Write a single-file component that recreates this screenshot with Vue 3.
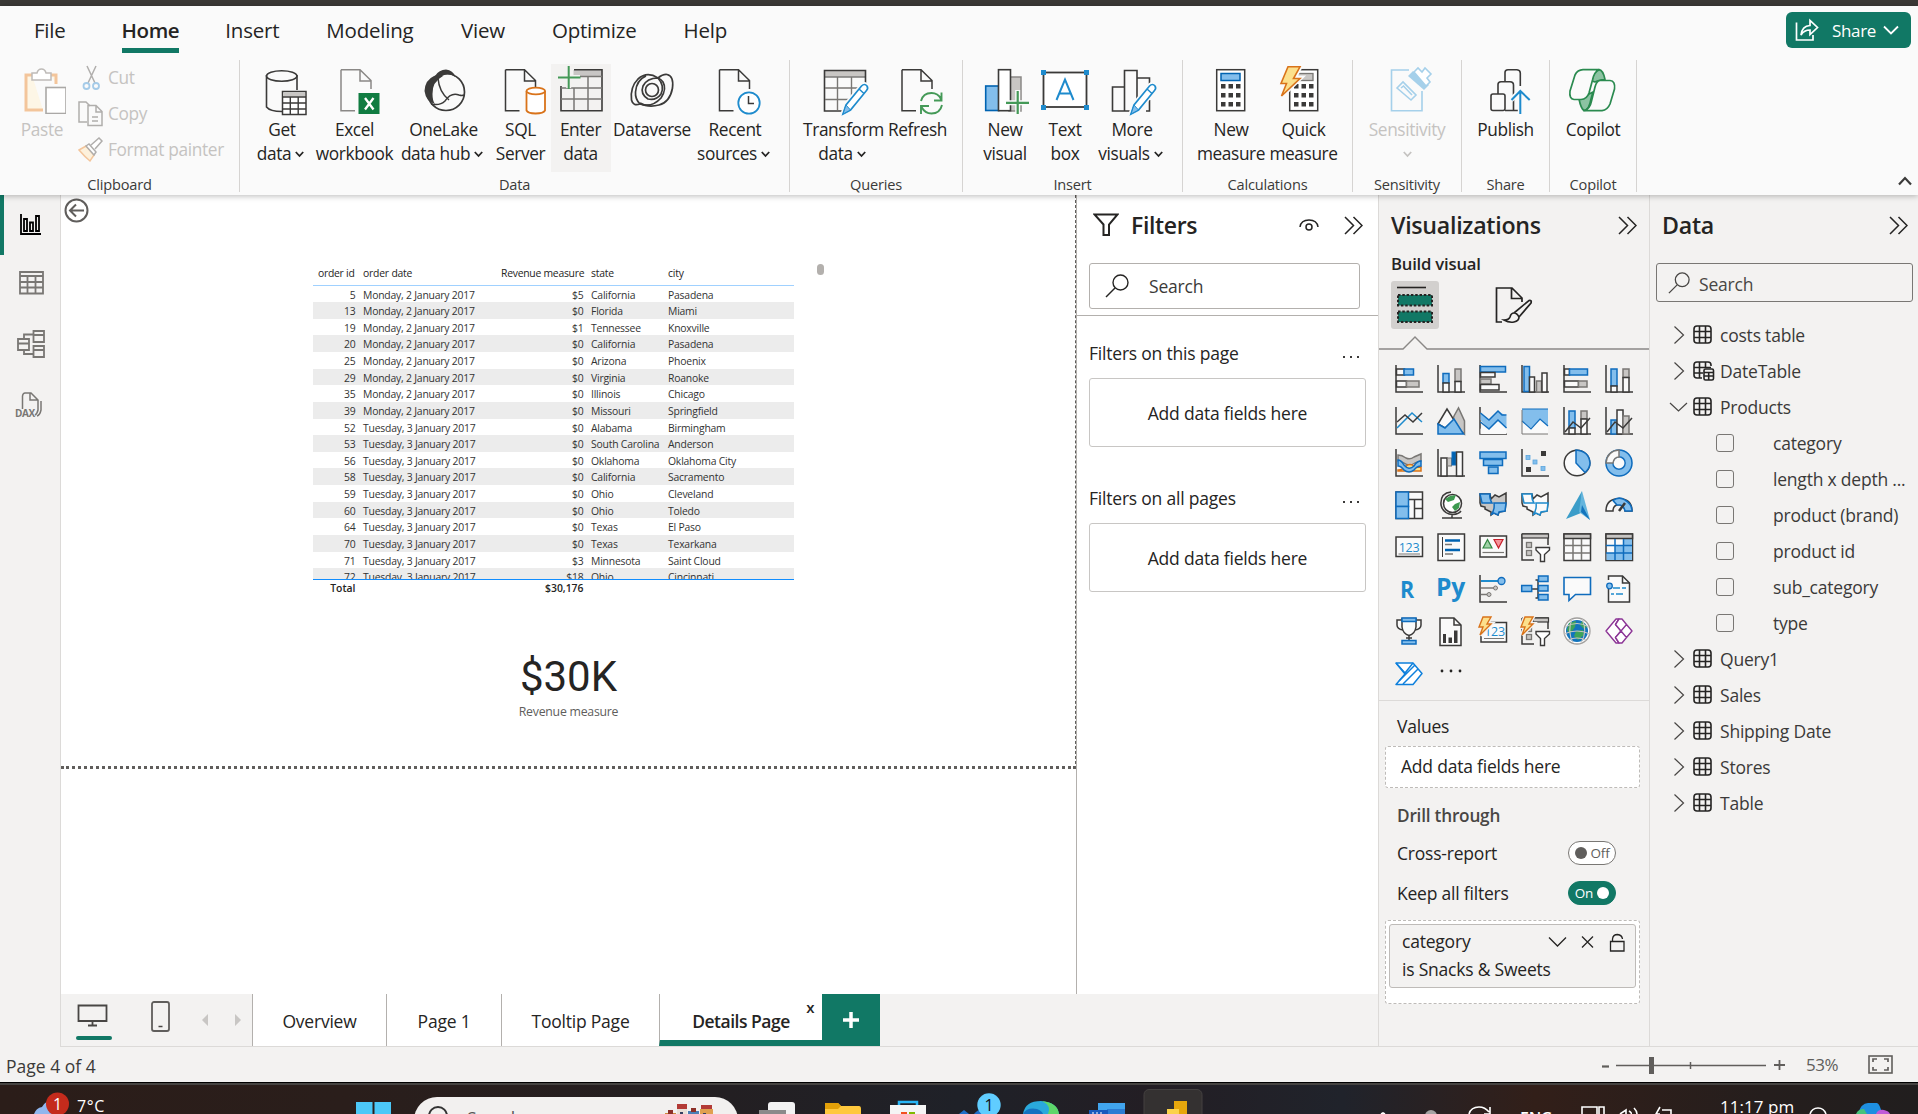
<script setup>
const menu = [
  { t: 'File', l: 34 }, { t: 'Home', l: 56, on: true }, { t: 'Insert', l: 46 }, { t: 'Modeling', l: 47 },
  { t: 'View', l: 47.5 }, { t: 'Optimize', l: 47 }, { t: 'Help', l: 47 },
]

const K = '#3b3a39'
const page = (x, c = K) =>
  `<path d="M${x} 3.7H${x + 19}L${x + 30} 14.5V23M${x + 14} 44.8H${x}V3.7M${x + 19} 4V15H${x + 30}" fill="none" stroke="${c}" stroke-width="1.5"/>`
const pencil = '<path d="M23 48L26 39L42 19.5Q45.500 17 47.500 21Q48 23 46 25L30 44Z" fill="#fafafa" stroke="#fafafa" stroke-width="5"/><path d="M23 48L26 39L41.500 20Q44.500 17 47 20Q48.500 22.500 46.500 24.500L30.500 44Z" fill="#fff" stroke="#1e8bcd" stroke-width="1.700"/><path d="M23 48L26 39L30.500 44Z" fill="#83beec" stroke="#1e8bcd"/><path d="M39 23L44 27.500" stroke="#1e8bcd" stroke-width="1.500"/>'
const dots = (x, y) => {
  let s = ''
  for (let r = 0; r < 3; r++) for (let c = 0; c < 3; c++) s += `<rect x="${x + c * 7.5}" y="${y + r * 9}" width="4.500" height="4.500"/>`
  return `<g fill="${K}">${s}</g>`
}

const art = {
  get: `<path d="M8.500 9V41Q12 45.500 24 45.500M39 9V24" fill="none" stroke="${K}" stroke-width="1.600"/><ellipse cx="23.700" cy="10" rx="15.200" ry="5.200" fill="none" stroke="${K}" stroke-width="1.600"/><rect x="24.500" y="25.500" width="23.500" height="23" fill="#fff" stroke="${K}" stroke-width="1.500"/><rect x="25.500" y="26.500" width="21.500" height="4" fill="#c8c6c4"/><path d="M24.500 31H48M24.500 37H48M24.500 43H48M32.300 31V48M40.200 31V48" stroke="${K}" stroke-width="1.400"/>`,
  excel: page(10, '#8a8886') + '<rect x="27.500" y="27" width="21" height="21" fill="#107c41"/><path d="M34 32L42.500 43.500M42.500 32L34 43.500" stroke="#fff" stroke-width="2.300"/>',
  lake: `<circle cx="26" cy="26" r="18.500" fill="#fafafa" stroke="${K}" stroke-width="1.700"/><path d="M14 10Q18 8 23 10Q12 16 12.500 28Q12.500 35 15 38Q6 36 4.500 25Q5 14 14 10Z" fill="${K}"/><path d="M15 10Q19 3.500 26 3.500Q33 4 35.500 11Q28 6.500 21 10.500Q18 12 15 10Z" fill="${K}"/><path d="M18 12Q19 26 29 34M11 38Q20 40 25 35Q31 26 39 29Q42 30 44 29" fill="none" stroke="${K}" stroke-width="1.500"/>`,
  sql: page(8.5) + '<path d="M29 25V44Q31 48 38 48Q46 48 48 44V25Z" fill="#fff" stroke="#fafafa" stroke-width="4"/><path d="M29.500 25V44.500Q31 47.500 38.500 47.500Q46.500 47.500 48 44.500V25" fill="#fff" stroke="#d9731a" stroke-width="1.800"/><ellipse cx="38.800" cy="25" rx="9.300" ry="3.400" fill="#fff" stroke="#d9731a" stroke-width="1.800"/>',
  enter: `<rect x="16.500" y="4" width="28" height="6.500" fill="#c8c6c4"/><path d="M4 20V44.700H45V3.700H17" fill="none" stroke="${K}" stroke-width="1.600"/><path d="M17 10.500H45M4 22H45M4 33H45M17 22V44M31 10.500V44" fill="none" stroke="#797774" stroke-width="1.500"/><path d="M1 11.500H23M11.700 0V22" stroke="#f3f2f1" stroke-width="5"/><path d="M1 11.500H23.500M11.700 0V23" stroke="#449957" stroke-width="2"/>`,
  verse: `<g fill="none" stroke="${K}" stroke-width="1.700"><path d="M30 12Q19 5 10 13Q2 21 3.500 34Q5 40.500 12 38Q7 33 7.500 26Q8.500 14 18 10"/><path d="M30 12Q35 8 39 8.500Q46 10 44.500 22Q42 36 31 39Q20 42 12 37"/><path d="M12 38Q24 42 33 32Q39 23 35 16Q33 13 30 12"/><path d="M30 12Q37 20 33 28Q28 35 20 33Q12 28 15 20Q19 12 30 12"/><circle cx="24" cy="24" r="6.500"/></g>`,
  recent: page(8.5) + '<circle cx="38" cy="37" r="13" fill="#fafafa"/><circle cx="38" cy="37" r="10.700" fill="#fff" stroke="#1e8bcd" stroke-width="1.800"/><path d="M37.500 30V37.500H43" fill="none" stroke="#3b3a39" stroke-width="1.500"/>',
  transform: `<rect x="4.500" y="5" width="40.500" height="5.500" fill="#c8c6c4"/><path d="M24 45H4.500V4.500H45.500V18" fill="none" stroke="${K}" stroke-width="1.600"/><path d="M4.500 11H45.500" stroke="${K}"/><path d="M5 22H38M5 33.500H30M17.500 11V44M31.500 11V33" stroke="#797774" stroke-width="1.400"/>` + pencil,
  refresh: page(8) + '<circle cx="37" cy="37" r="12.500" fill="#fafafa"/><path d="M27 35Q29 27 37.500 27Q44 27 47 33M47.500 26.500V34.500H40M48 39Q46 47.500 37.500 47.500Q31 47.500 27.500 41M27 48V40H35" fill="none" stroke="#449957" stroke-width="1.900"/>',
  newvis: `<rect x="28" y="11" width="12" height="34" fill="#c8c6c4" stroke="#8a8886" stroke-width="1.500"/><rect x="4.700" y="20" width="13" height="24.500" fill="#83beec" stroke="#0063b1" stroke-width="1.600"/><rect x="17.500" y="3.700" width="12" height="41" fill="#fff" stroke="${K}" stroke-width="1.600"/><path d="M25 36.800H48M36.700 24V48" stroke="#fafafa" stroke-width="5"/><path d="M25 36.800H48M36.700 25V48" stroke="#449957" stroke-width="2.200"/>`,
  text: `<rect x="2.500" y="6.500" width="43" height="34.500" fill="#fff" stroke="${K}" stroke-width="1.800"/><g fill="#1e8bcd"><rect y="4" width="5" height="5"/><rect x="43" y="4" width="5" height="5"/><rect y="39" width="5" height="5"/><rect x="43" y="39" width="5" height="5"/></g><path d="M15.500 34L24 13.500L32.500 34M18.500 27.500H29.500" fill="none" stroke="#1e8bcd" stroke-width="2"/>`,
  more: `<path d="M24 45H4.500V21H16.500V45M16.500 44V4.500H29V36M29 12H41.500V20M38 45H41.500V34" fill="none" stroke="${K}" stroke-width="1.600"/>` + pencil,
  calc: `<rect x="9.700" y="3.700" width="28" height="41" fill="#fff" stroke="${K}" stroke-width="1.500"/><rect x="14" y="7.500" width="19" height="7" fill="#83beec" stroke="#0063b1" stroke-width="1.500"/>` + dots(14, 18),
  quick: `<rect x="9.700" y="3.700" width="28" height="41" fill="#fff" stroke="${K}" stroke-width="1.500"/><rect x="15" y="7.500" width="18" height="7" fill="#c8c6c4" stroke="#797774" stroke-width="1.300"/>${dots(14, 18)}<path d="M8 .7H20L14 12H20L1.500 30L7 17H1Z" fill="#fafafa" stroke="#fafafa" stroke-width="5"/><path d="M8 .8H20L13.500 12.500H20L1.500 30L6.500 17.500H1Z" fill="#fce08c" stroke="#d9731a" stroke-width="1.600"/>`,
  sens: '<g fill="none" stroke="#a5d0ea" stroke-width="1.600"><path d="M26 4H8.500V44.700H39V25"/><path d="M14 22L20 16L33 29L28 34Z"/><path d="M18 22L20.500 20L29 29"/></g><path d="M25 10L30 5L46 19L41 24Z" fill="#a5d0ea"/><path d="M31 6L35 2L39 6L42 2L48 8L44 12L47 16L43 20Z" fill="#fff" stroke="#a5d0ea" stroke-width="1.600"/>',
  publish: `<g fill="none" stroke="${K}" stroke-width="1.600"><rect x="9" y="28" width="14" height="16.500" rx="2"/><path d="M16 28V18.500Q16 15.800 19 15.800H28Q31.500 16 31.500 19V44.500H23M23 15V6.500Q23 3.700 26 3.700H35Q38.300 4 38.300 7V20M31 44.500H37"/></g><path d="M38.300 48V25M29 34L38.300 24.500L47.700 34" fill="none" stroke="#fafafa" stroke-width="5"/><path d="M38.300 48V25M29.500 34L38.300 25L47.700 34" fill="none" stroke="#1e8bcd" stroke-width="2"/>`,
  copilot: '<g stroke="#2a8a4f" stroke-width="1.700" stroke-linejoin="round"><path d="M23 15Q24 4 30 3.700Q34 4 36 13.500Q29 14 26 16Z" fill="#8cc3a2"/><path d="M10 33Q12 43 15 44.500Q20 44.500 22 33L24 26Z" fill="#8cc3a2"/><path d="M14 3.700H30Q25 6 23.500 14L20 27Q18 33 12 33.500H5Q0 33 1 25L6 9Q8.500 4 14 3.700Z" fill="#fafafa"/><path d="M31 14.500H41Q46.500 15 45.500 23L41 38Q38.500 44 33 44.700H15Q21 43 22.500 35L26 21Q27.500 15 31 14.500Z" fill="#fafafa"/></g>',
}

const groups = [
  { n: 'Data', w: 550, b: [
    { i: 'get', w: 84, a: 'Get', c: 'data', v: 1 }, { i: 'excel', w: 61, a: 'Excel', c: 'workbook' },
    { i: 'lake', w: 117, a: 'OneLake', c: 'data hub', v: 1 }, { i: 'sql', w: 37, a: 'SQL', c: 'Server' },
    { i: 'enter', w: 83, a: 'Enter', c: 'data', hot: 1 }, { i: 'verse', w: 60, a: 'Dataverse' },
    { i: 'recent', w: 106, a: 'Recent', c: 'sources', v: 1 } ] },
  { n: 'Queries', w: 173, b: [ { i: 'transform', w: 107, a: 'Transform', c: 'data', v: 1 }, { i: 'refresh', w: 41, a: 'Refresh' } ] },
  { n: 'Insert', w: 220, b: [ { i: 'newvis', w: 84, a: 'New', c: 'visual' }, { i: 'text', w: 36, a: 'Text', c: 'box' }, { i: 'more', w: 98, a: 'More', c: 'visuals', v: 1 } ] },
  { n: 'Calculations', w: 170, b: [ { i: 'calc', w: 96, a: 'New', c: 'measure' }, { i: 'quick', w: 49, a: 'Quick', c: 'measure' } ] },
  { n: 'Sensitivity', w: 109, b: [ { i: 'sens', w: 108, a: 'Sensitivity', c: '', v: 1, off: 1 } ] },
  { n: 'Share', w: 88, b: [ { i: 'publish', w: 87, a: 'Publish' } ] },
  { n: 'Copilot', w: 87, b: [ { i: 'copilot', w: 86, a: 'Copilot' } ] },
]

const M = 'Monday, 2 January 2017'
const T = 'Tuesday, 3 January 2017'
const rows = [
  [5, M, '$5', 'California', 'Pasadena'], [13, M, '$0', 'Florida', 'Miami'], [19, M, '$1', 'Tennessee', 'Knoxville'],
  [20, M, '$0', 'California', 'Pasadena'], [25, M, '$0', 'Arizona', 'Phoenix'], [29, M, '$0', 'Virginia', 'Roanoke'],
  [35, M, '$0', 'Illinois', 'Chicago'], [39, M, '$0', 'Missouri', 'Springfield'], [52, T, '$0', 'Alabama', 'Birmingham'],
  [53, T, '$0', 'South Carolina', 'Anderson'], [56, T, '$0', 'Oklahoma', 'Oklahoma City'], [58, T, '$0', 'California', 'Sacramento'],
  [59, T, '$0', 'Ohio', 'Cleveland'], [60, T, '$0', 'Ohio', 'Toledo'], [64, T, '$0', 'Texas', 'El Paso'],
  [70, T, '$0', 'Texas', 'Texarkana'], [71, T, '$3', 'Minnesota', 'Saint Cloud'], [72, T, '$18', 'Ohio', 'Cincinnati'],
]

const B = '#0f6cbd'
const F = '#83beec'
const G = '#797774'
const H = '#c8c6c4'
const W = '#fafafa'
const ax = `<path d="M1 0V27H28" fill="none" stroke="${K}" stroke-width="1.500"/>`
const r = (x, y, w, h, f, s, sw = 1.5) => `<rect x="${x}" y="${y}" width="${w}" height="${h}" fill="${f}" stroke="${s}" stroke-width="${sw}"/>`
const p = (d, s, f = 'none', sw = 1.5) => `<path d="${d}" fill="${f}" stroke="${s}" stroke-width="${sw}"/>`
const bolt = p('M4 0H12L8 7H12L1 18L4 10H0Z', '#f3f2f1', '#f3f2f1', 4) + p('M4 0H12L8 7H12L1 18L4 10H0Z', '#d9731a', '#fce08c', 1.4)
const slicer = (c) => p('M1 1V27H13M27 12V1H1', K) + (c || r(1, 1, 26.5, 4, H, K, 1.2)) + r(5.5, 9.5, 5, 5, H, G, 1.3) + r(5.5, 17.5, 5, 5, H, G, 1.3) + p('M15 14.500H28.500V17L23.500 21.500V28.500H19.500V21.500L15 17Z', K, '#fff', 1.4)
const viz = [
  ax + r(1.5, 4, 8, 6, W, K) + r(9, 4, 9.5, 6, F, B) + r(1.5, 16, 10, 6, W, K) + r(11.5, 16, 12.5, 6, H, G),
  ax + r(6, 8.5, 6, 9.5, F, B) + r(6, 18, 6, 9, W, K) + r(18, 4, 6, 12.5, H, G) + r(18, 16.5, 6, 10.5, W, K),
  ax + r(1.5, 1.5, 25, 5.5, F, B) + r(1.5, 7.5, 14.5, 4.5, W, K) + r(1.5, 14, 10.5, 5, H, G) + r(1.5, 19.5, 18.5, 5.5, W, K),
  ax + r(3, 1.5, 5.5, 25, F, B) + r(8.5, 12, 5, 15, W, K) + r(15.5, 16, 5, 11, H, G) + r(21, 8, 5, 19, W, K),
  ax + r(1.5, 4, 5, 6, W, K) + r(6.5, 4, 18, 6, F, B) + r(1.5, 16, 14, 6, W, K) + r(15.5, 16, 8.5, 6, H, G),
  ax + r(6, 4, 6, 17, F, B) + r(6, 21, 6, 6, W, K) + r(18, 4, 6, 8.5, H, G) + r(18, 12.5, 6, 14.5, W, K),
  ax + p('M2 21L17 6L27 15', '#1e8bcd') + p('M2 15L10 8L18 15L27 6', K),
  p('M17 9L21.500 1L27.500 14V27L15 15Z', G, H) + p('M1 17L10 2L17 13L8 21Z', K, W) + p('M1 17L8 21L17 12L26.500 27H1Z', B, F),
  ax + p('M1.500 6L10 13L19 4L27.500 9V22L19 14L10 22L1.500 13Z', 'none', F) + p('M1.500 22L5 17L10 22L19 14L27.500 21V27H1.500Z', 'none', W) + p('M1.500 6L10 13L19 4L23 8H27.500M1.500 15L10 22L19 13L27.500 21', B),
  p('M1 2H27V19L19 12L10 21L1 14Z', 'none', F) + p('M1 15L10 22L19 13L27 20V27H1Z', 'none', W) + p('M1 2H27M1 14L10 22L19 12L27 19', B, 'none', 1.2) + p('M1 3V27M1 27H27', G, 'none', 1),
  ax + r(6, 4, 6, 17, F, B) + r(6, 21, 6, 6, W, K) + r(18, 4, 6, 8, H, G) + r(18, 12, 6, 15, W, K) + p('M2 25L10 15L18 21L27 11', K),
  ax + r(6, 13, 6, 14, F, B) + r(12, 3, 6, 24, W, K) + r(18, 9, 6, 18, H, G) + p('M2 25L10 15L18 21L27 11', K),
  ax + p('M3 6Q7 6 11 9Q15 11 19 8L26 5V12L20 14Q14 18 9 14Q6 12 3 12Z', G, H) + p('M3 21Q8 21 11 17Q15 14 19 17Q22 19 26 18V22H3Z', '#d9731a', '#fce08c') + p('M3 11Q6 11 9 16Q14 22 19 17Q22 12 26 12V17Q22 17 19 21Q14 25 9 21Q6 17 3 17Z', B, F),
  ax + r(4, 9, 6, 18, W, K) + r(10.5, 9, 4, 8, H, G, 1) + r(15, 3, 3.5, 13, '#0063b1', B, 1) + r(19.5, 3, 6, 24, W, K),
  r(1, 3, 26, 6.5, F, B) + r(4.5, 10.5, 19, 6, F, B) + r(9.5, 18, 9.5, 6.5, F, B),
  ax + '<g fill="#83beec" stroke="#5aa5de" stroke-width=".8"><rect x="5" y="6.500" width="4" height="4"/><rect x="12" y="11" width="4" height="4"/><rect x="20" y="17.500" width="4" height="4"/></g><g fill="#3b3a39"><rect x="20" y="2" width="5" height="5"/><rect x="5" y="18" width="5" height="5"/></g>',
  `<circle cx="14" cy="14" r="12.800" fill="${W}" stroke="${K}" stroke-width="1.500"/>` + p('M13 1V14L22 23.500Q27 19 27 14Q26 2 13 1Z', B, F),
  `<circle cx="14" cy="14" r="10" fill="none" stroke="${F}" stroke-width="6.500"/><circle cx="14" cy="14" r="13" fill="none" stroke="${B}" stroke-width="1.500"/><circle cx="14" cy="14" r="6.200" fill="${W}" stroke="${B}" stroke-width="1.500"/>` + p('M1 14Q2 2 14 1V8Q9 8 8 14Z', G, W),
  r(1, 1, 26.5, 26.5, W, K) + r(1, 1, 12.5, 14.5, F, B) + r(1, 15.5, 12.5, 12, F, B) + p('M14 8.500H27.500M19.500 8.500V27M19.500 17.500H27.500', K),
  `<circle cx="15.500" cy="12.500" r="9" fill="#fff" stroke="${K}" stroke-width="1.500"/><path d="M13 5L19 4L17 9L11 11L8 8ZM18 13L23 11L22 17L18 20L15 16Z" fill="#3d9a50"/>` + p('M14 1Q3 2 4 14Q6 23 16 23.500Q22 23 24 20M15 24V27M5 27H25', K),
  p('M1 12V3H11L12 8L16 4L20 6L27 2V12L26 20L20 21L19 24L15 22L12 24V21L6 18V16L2 15Z', K, H) + p('M1 3H11Q10 7 13 12H3Z', B, F) + p('M15 12H27L26 20L20 21L19 24L15 22L12 24Q16 19 15 12Z', B, F),
  p('M1 12V3H11L12 8L16 4L20 6L27 2V12L26 20L20 21L19 24L15 22L12 24V21L6 18V16L2 15Z', K, W) + p('M1 3H11Q10 7 13 12H3Z', '#1e8bcd', W) + p('M15 12H27L26 20L20 21L19 24L15 22L12 24Q16 19 15 12Z', '#1e8bcd', W),
  '<path d="M19 0L3 28L18 22Z" fill="#3b9dc9"/><path d="M19 0L27 29L16 21Z" fill="#64b5dd"/><path d="M18 21L27 29L19 14Z" fill="#1274bd"/>',
  p('M1 20Q1 8 14 7.500Q27 8 27 20H20Q20 14 14 13.500Q8 14 8 20Z', K, W) + p('M8 9.500Q14 5 20 9Q27 13 27 20H20Q19 15 15 14L12 14Z', B, F) + p('M14 20L20 12', K, 'none', 2.5),
  r(1, 4, 26.5, 19.5, W, K) + '<text x="14" y="18.500" text-anchor="middle" font-size="12.500" letter-spacing="-.3" font-family="Open Sans, sans-serif" fill="#1e8bcd">123</text>' + p('M3.500 21H25', G, 'none', 1),
  r(1, 1, 26.5, 26.5, W, K) + p('M5.500 4V24', K, 'none', 1) + p('M8 7.500H23M8 17H23', '#0063b1', 'none', 2.4) + p('M8 11.500H15M8 21H16', G),
  r(1, 3, 26.5, 21, W, K) + p('M4 15L8.500 6.500L13 15Z', '#2f8540', '#9fd2a7', 1.2) + p('M15 6.500H24L19.500 15Z', '#c8202b', '#f4949a', 1.2) + p('M3.500 19.500H25', G, 'none', 1.2),
  slicer(),
  r(1, 1, 26.5, 26.5, W, K) + r(1, 1, 26.5, 4.5, H, K) + p('M1 12.500H27M1 20H27M10 6V27M18.500 6V27', G),
  r(1, 1, 26.5, 26.5, W, K) + `<path d="M18.500 6H27V27H1.500V20H10V13H18.500Z" fill="${F}"/>` + r(1, 1, 26.5, 4.5, H, K) + p('M1 12.500H27M1 20H27M10 6V27M18.500 6V27', B),
  '<text x="5" y="22.500" font-size="24" font-weight="700" font-family="Open Sans, sans-serif" textLength="14" lengthAdjust="spacingAndGlyphs" fill="#1e8bcd">R</text>',
  '<text x="-1" y="20.500" font-size="25" font-weight="700" font-family="Open Sans, sans-serif" textLength="29" lengthAdjust="spacingAndGlyphs" fill="#1e8bcd">Py</text>',
  ax + p('M2 6H20', '#1e8bcd', 'none', 2) + p('M2 13H16M2 19.500H9', G) + `<circle cx="22.500" cy="6" r="3.500" fill="${F}" stroke="${B}" stroke-width="1.300"/><circle cx="16.500" cy="13" r="2" fill="${H}" stroke="${G}"/><circle cx="10" cy="19.500" r="2" fill="${H}" stroke="${G}"/>`,
  p('M10 14H17M17 5V23H14.500M14.500 5H17', K) + r(0.7, 10.5, 10, 6, F, B) + r(17.5, 1, 9.5, 5.5, F, B) + r(17.5, 10.5, 9.5, 5.5, F, B) + r(17.5, 19.5, 9.5, 5.5, F, B),
  p('M1 2.500H27.500V19.500H12.500L6 25.500V19.500H1Z', B, W, 1.6),
  p('M3.500 5V1H17.500L24.500 8V27H3.500V14', K, W) + p('M17.500 1V8H24.500', K) + p('M8 13H15M17 13H21M6 19H9M11 19H18', '#1e8bcd') + `<circle cx="4.500" cy="11" r="2.800" fill="${F}" stroke="${B}" stroke-width="1.300"/>`,
  p('M7 3H2V8Q2 12 8 13M21 3H26V8Q26 12 20 13', K, W) + p('M7 1.500V10Q8 17 14 18.500Q20 17 21 10V1.500Z', K, W) + r(7, 1, 14, 3.5, F, B) + p('M14 18V23M11 21H17', K) + r(7, 23.5, 14, 3.5, F, B),
  p('M3 1H17L24 8V28.500H3Z', K, W) + p('M17 1V8H24', K) + '<path d="M6 17H9V26H6ZM11.500 20.500H15V26H11.500ZM17 13.500H20.500V26H17Z" fill="#3b3a39"/>',
  r(2, 5.5, 25.5, 19.5, W, K) + '<text x="15.500" y="19" text-anchor="middle" font-size="12.500" letter-spacing="-.3" font-family="Open Sans, sans-serif" fill="#1e8bcd">123</text>' + p('M5 21.500H25', G, 'none', 1) + bolt,
  slicer(r(12, 1, 15.5, 4, H, K, 1.2)) + bolt,
  '<circle cx="14" cy="14" r="13" fill="#fff" stroke="#a19f9d" stroke-width="1.300"/><circle cx="14" cy="14" r="11" fill="#1274bd"/><path d="M6 6L13 4L12 10L7 17L4 13ZM13 14L20 13L21 18L15 23L11 19ZM19 4L24 10L21 12L17 8Z" fill="#3da35a"/><path d="M2 10Q14 3 26 10M1 17Q14 11 27 17M9 2Q4 14 10 26M19 2Q25 14 18 26M5 23Q14 19 23 23" fill="none" stroke="#c8c6c4" stroke-width="1.100"/>',
  '<g fill="#fff" stroke="#8c3596" stroke-width="1.400" stroke-linejoin="round"><path d="M1 14L11 2H14L10.500 7.500L16 14L10.500 20.500L14 26H11Z"/><path d="M10.500 7.500L14 2H17L21.500 7.500L16 14ZM10.500 20.500L16 14L21.500 20.500L17 26H14ZM16 14L21.500 7.500L27 14L21.500 20.500Z"/></g>',
  '<g fill="#fff" stroke="#0f80dc" stroke-width="1.500" stroke-linejoin="round"><path d="M1 4H18L27 14.500L18 25.500H1L10 15Z"/><path d="M1 4L10 14L18 4M4 22L20 6M8 25L23 10" fill="none"/></g>',
  '<g fill="#252423"><circle cx="5" cy="12" r="1.400"/><circle cx="14" cy="12" r="1.400"/><circle cx="23" cy="12" r="1.400"/></g>',
]

const tree = [
  { t: 'costs table' }, { t: 'DateTable', d: 1 }, { t: 'Products', o: 1 },
  { f: 'category' }, { f: 'length x depth ...' }, { f: 'product (brand)' }, { f: 'product id' }, { f: 'sub_category' }, { f: 'type' },
  { t: 'Query1' }, { t: 'Sales' }, { t: 'Shipping Date' }, { t: 'Stores' }, { t: 'Table' },
]
</script>

<template>
  <div class="screen">
    <div class="titlebar"></div>
    <header class="ribbon">
      <nav class="menu">
        <span v-for="m in menu" :key="m.t" class="mi" :class="{ on: m.on }" :style="{ marginLeft: m.l + 'px' }">{{ m.t }}</span>
        <button class="share">
          <svg width="24" height="24" viewBox="0 0 24 24" fill="none" stroke="#fff" stroke-width="1.700"><path d="M1.500 4.500V22H18V17M6 17Q7 8 15 7.500V2.500L22.500 9.500L15 16.500V12Q9 12 6 17Z" /></svg>
          <span>Share</span>
          <svg width="16" height="10" viewBox="0 0 16 10" fill="none" stroke="#fff" stroke-width="1.800"><path d="M1 1.500L8 8.500L15 1.500" /></svg>
        </button>
      </nav>
      <div class="tools">
        <section class="group clip">
          <div class="cbody">
            <div class="paste">
              <svg width="48" height="48" viewBox="0 0 48 48"><path d="M14 9H8V44H25M33 9H38V18" fill="#fdf6e6" stroke="#f3c59b" stroke-width="3" /><path d="M14 7H19Q20 3 23.500 3Q27 3 28 7H33V14H14Z" fill="#fff" stroke="#bebbb8" stroke-width="1.500" /><rect x="28" y="21.500" width="20" height="26" fill="#fff" stroke="#aaa8a6" stroke-width="1.600" /></svg>
              <span>Paste</span>
            </div>
            <div class="clist">
              <div><svg width="26" height="26" viewBox="0 0 26 26" fill="none"><path d="M9 1L17 18M18 1L10 18" stroke="#b0aeac" stroke-width="1.500" /><circle cx="8.500" cy="21" r="3" stroke="#a5cbe8" stroke-width="1.800" /><circle cx="18" cy="21" r="3" stroke="#a5cbe8" stroke-width="1.800" /></svg>Cut</div>
              <div><svg width="26" height="26" viewBox="0 0 26 26" fill="none" stroke="#b0aeac" stroke-width="1.500"><path d="M9 21H1V1H8L12 5" /><path d="M10 4.500H18L24 10.500V24.500H10ZM18 4.500V11H24M14 16H20M14 20H20" /></svg>Copy</div>
              <div><svg width="26" height="26" viewBox="0 0 26 26" fill="none"><path d="M1 13L8 9L16 18L12 24Q7 20 1 13Z" fill="#fdf1dc" stroke="#f3c59b" stroke-width="1.500" /><path d="M8 9L11 7L18 15L16 18ZM13 8L21 1L24 4L17 12" stroke="#b0aeac" stroke-width="1.500" fill="#fff" /></svg>Format painter</div>
            </div>
          </div>
          <div class="gname">Clipboard</div>
        </section>
        <section v-for="g in groups" :key="g.n" class="group" :style="{ width: g.w + 'px' }">
          <div class="gbody">
            <div v-for="b in g.b" :key="b.i" class="cell" :style="{ width: b.w + 'px' }">
              <div class="btn" :class="{ hot: b.hot, off: b.off }">
                <svg width="48" height="50" viewBox="0 0 48 50" overflow="visible" v-html="art[b.i]"></svg>
                <span>{{ b.a }}</span>
                <span v-if="b.c !== undefined" class="l2" :class="{ drop2: b.v && b.c }">{{ b.c }}<svg v-if="b.v" width="9" height="7" viewBox="0 0 9 7" fill="none" stroke="currentColor" stroke-width="1.800"><path d="M.8 1L4.500 5L8.200 1" /></svg></span>
              </div>
            </div>
          </div>
          <div class="gname">{{ g.n }}</div>
        </section>
        <svg class="fold" width="14" height="10" viewBox="0 0 14 10" fill="none" stroke="#3b3a39" stroke-width="2.200"><path d="M1 8.500L7 2L13 8.500" /></svg>
      </div>
    </header>

    <main class="work">
      <aside class="rail">
        <div class="ind"></div>
        <svg width="24" height="24" viewBox="0 0 24 24" fill="none" stroke="#000" stroke-width="1.800"><path d="M2 1V21H22M5 18V6H8V18ZM11 18V9.500H14V18ZM17 18V3H20V18Z" /></svg>
        <svg width="26" height="24" viewBox="0 0 26 24" fill="none" stroke="#797774" stroke-width="1.800"><path d="M2 1H25V22.500H2ZM2 5H25M2 11H25M2 16.500H25M9.500 5V22M17.500 5V22" /></svg>
        <svg width="28" height="28" viewBox="0 0 28 28" fill="none" stroke="#797774" stroke-width="1.800"><path d="M1 9H12V20H1ZM1 13.500H12M16.500 1H27V12H16.500ZM16.500 5H27M16.500 16H27V27H16.500ZM16.500 20H27M7 9V4.500H16M7 20V24H16" /></svg>
        <svg width="28" height="26" viewBox="0 0 28 26" fill="none" stroke="#797774" stroke-width="1.500"><path d="M7.500 17V4Q8 1 10 1H16L23 8V18Q22 22 20 23M15 1V8H23M26 9V18Q25 23 22 24" /><text x="0" y="24.500" font-size="10" font-weight="700" stroke="none" fill="#797774" font-family="Open Sans, sans-serif" textLength="20">DAX</text></svg>
      </aside>

      <div class="stage">
        <div class="canvas-row">
          <div class="canvas">
            <div class="page">
              <svg class="back" width="25" height="25" viewBox="0 0 25 25" fill="none" stroke="#605e5c" stroke-width="2"><circle cx="12.500" cy="12.500" r="11" /><path d="M20 12.500H6M12 6.500L6 12.500L12 18.500" /></svg>
              <div class="visual">
                <div class="tbl">
                  <div class="tr th"><span>order id</span><span>order date</span><span>Revenue measure</span><span>state</span><span>city</span></div>
                  <div class="tb"><div v-for="x in rows" :key="x[0]" class="tr"><span v-for="(c, i) in x" :key="i">{{ c }}</span></div></div>
                  <div class="tr tot"><span>Total</span><span></span><span>$30,176</span></div>
                </div>
                <i class="thumb"></i>
              </div>
              <div class="card"><b>$30K</b><span>Revenue measure</span></div>
            </div>
          </div>

          <aside class="filters">
            <div class="fh">
              <svg width="26" height="24" viewBox="0 0 26 24" fill="none" stroke="#252423" stroke-width="2"><path d="M1.500 1.500H24.500L16 11.500V22H10.500V11.500Z" /></svg>
              <h2>Filters</h2>
              <svg class="eye" width="20" height="14" viewBox="0 0 20 14" fill="none" stroke="#252423" stroke-width="1.500"><path d="M1 9Q2 2 10 2Q18 2 19 9" /><circle cx="10" cy="9" r="3" /></svg>
              <svg width="19" height="19" viewBox="0 0 19 19" fill="none" stroke="#252423" stroke-width="1.500"><path d="M1 1L9.500 9.500L1 18M9.500 1L18 9.500L9.500 18" /></svg>
            </div>
            <div class="search"><svg width="24" height="24" viewBox="0 0 24 24" fill="none" stroke="#252423" stroke-width="1.400"><circle cx="15.500" cy="8.500" r="7.500" /><path d="M10 14L1 23" /></svg>Search</div>
            <div class="rule"></div>
            <template v-for="n in ['Filters on this page', 'Filters on all pages']" :key="n">
              <div class="fl"><span>{{ n }}</span><i></i><i></i><i></i></div>
              <div class="drop">Add data fields here</div>
            </template>
          </aside>
        </div>
        <div class="pages">
          <svg width="191" height="52" viewBox="0 0 191 52" fill="none"><path d="M17.500 11.500H45.500V27H17.500ZM31.500 27V31M27 31.500H36" stroke="#484644" stroke-width="1.800" /><rect x="15" y="42" width="36" height="4" rx="2" fill="#117865" /><rect x="91" y="8" width="17" height="29" rx="2" stroke="#605e5c" stroke-width="1.800" /><path d="M97.500 32.500H101.500" stroke="#484644" stroke-width="1.500" /><path d="M147 20V32L141 26ZM174 20V32L180 26Z" fill="#c8c6c4" /></svg>
          <div class="pt p1">Overview</div><div class="pt p2">Page 1</div><div class="pt p3">Tooltip Page</div>
          <div class="pt p4">Details Page<i>x</i></div>
          <div class="add"><svg width="16" height="16" viewBox="0 0 16 16"><path d="M0 8H16M8 0V16" stroke="#fff" stroke-width="3.500" /></svg></div>
        </div>
      </div>

      <aside class="viz">
        <div class="vh"><h2>Visualizations</h2><svg width="19" height="19" viewBox="0 0 19 19" fill="none" stroke="#252423" stroke-width="1.500"><path d="M1 1L9.500 9.500L1 18M9.500 1L18 9.500L9.500 18" /></svg></div>
        <div class="bv">Build visual</div>
        <div class="modes">
          <div class="mode"><svg width="48" height="48" viewBox="0 0 48 48"><path d="M6 6.500H35" stroke="#252423" stroke-width="1.600" /><g fill="#117865" stroke="#252423" stroke-width="2" stroke-dasharray="2.500 1.800"><rect x="7" y="14" width="34" height="10.500" /><rect x="7" y="30.500" width="34" height="10.500" /></g></svg></div>
          <svg width="38" height="38" viewBox="0 0 38 38" fill="none" stroke="#252423" stroke-width="1.700"><path d="M7 36H1.500V2H17L27 12V16M16.500 2V12.500H27" /><path d="M19 27L34 14.500Q37 14 36 17L24 31Q22 27 19 27ZM19 27Q16 27 15 31Q14 34 9 34Q14 37 19 36Q24 35 24 31" fill="#f3f2f1" /></svg>
        </div>
        <svg class="notch" width="270" height="14" viewBox="0 0 270 14" fill="none" stroke="#8a8886" stroke-width="1.400"><path d="M0 13H24L36 1L48 13H270" /></svg>
        <div class="vgrid"><svg v-for="(v, i) in viz" :key="i" width="28" height="28" viewBox="0 0 28 28" overflow="visible" v-html="v"></svg></div>
        <div class="wells">
          <div class="wl">Values</div>
          <div class="well">Add data fields here</div>
          <div class="wl dr">Drill through</div>
          <div class="wl sw"><span>Cross-report</span><div class="tg"><i></i>Off</div></div>
          <div class="wl sw"><span>Keep all filters</span><div class="tg on">On<i></i></div></div>
          <div class="fbox"><div class="fcard">
            <div class="f1"><span>category</span>
              <svg width="78" height="20" viewBox="0 0 78 20" fill="none" stroke="#252423" stroke-width="1.300"><path d="M1 5.500L9.500 14L18 5.500M34 4.500L45 15.500M45 4.500L34 15.500M62.500 9.500H76V19H62.500ZM64.500 9.500V7Q65 2.500 69.500 2.500Q74 3 74.500 7" /></svg></div>
            <div>is Snacks &amp; Sweets</div>
          </div></div>
        </div>
      </aside>

      <aside class="data">
        <div class="vh"><h2>Data</h2><svg width="19" height="19" viewBox="0 0 19 19" fill="none" stroke="#252423" stroke-width="1.500"><path d="M1 1L9.500 9.500L1 18M9.500 1L18 9.500L9.500 18" /></svg></div>
        <div class="ds"><svg width="22" height="22" viewBox="0 0 24 24" fill="none" stroke="#484644" stroke-width="1.400"><circle cx="15.500" cy="8.500" r="7.500" /><path d="M10 14L1 23" /></svg><span>Search</span></div>
        <div v-for="n in tree" :key="n.t || n.f" class="node" :class="{ leaf: n.f }">
          <template v-if="n.t">
            <svg width="20" height="20" viewBox="0 0 20 20" fill="none" stroke="#484644" stroke-width="1.200"><path :d="n.o ? 'M1 6L9.500 14L18 6' : 'M5.500 1.500L14.500 10L5.500 18.500'" /></svg>
            <svg class="ti" width="22" height="20" viewBox="0 0 22 20" fill="none" stroke="#252423" stroke-width="1.600">
              <template v-if="n.d"><path d="M9 17H4Q1 17 1 14V4Q1 1 4 1H15Q18 1 18 4V5M1 6.500H18M1 12H10M6.500 1V17M12.500 1V7" /><rect x="11" y="8" width="9.500" height="11" rx="1.500" fill="#f3f2f1" /><path d="M11 11.500H20M11 15H20M15.700 12V19" /></template>
              <path v-else d="M4 1H15Q18 1 18 4V15Q18 18 15 18H4Q1 18 1 15V4Q1 1 4 1ZM1 6.500H18M1 12.500H18M6.500 1V18M12.500 1V18" />
            </svg>
            <span>{{ n.t }}</span>
          </template>
          <template v-else><i></i><span>{{ n.f }}</span></template>
        </div>
      </aside>
    </main>

    <footer class="status">
      <span>Page 4 of 4</span>
      <svg width="186" height="20" viewBox="0 0 186 20" stroke="#605e5c" fill="none"><path d="M1 11.500H8" stroke-width="2.200" /><path d="M15 10.500H165" stroke-width="1.300" /><path d="M50.500 2V19" stroke-width="5" /><path d="M89.500 7V14" stroke-width="1.500" /><path d="M173 10H184M178.500 5V15" stroke-width="1.800" /></svg>
      <span class="pct">53%</span>
      <svg width="25" height="19" viewBox="0 0 25 19" fill="none" stroke="#605e5c"><rect x="1" y="1" width="23" height="17" stroke-width="1.600" /><path d="M5 7V4H9M16 4H20V7M20 12V15H16M9 15H5V12" stroke-width="1.700" /></svg>
    </footer>

    <div class="taskbar">
      <svg width="414" height="29" viewBox="0 0 414 29">
        <path d="M34 29Q36 23 42 22Q46 14 56 15V29Z" fill="#8fb6ee" /><circle cx="57.500" cy="19" r="11.500" fill="#c42b1c" />
        <text x="57.500" y="25" text-anchor="middle" class="tx">1</text><text x="77" y="27" class="tx" textLength="27">7°C</text>
        <path d="M356 17H372.500V29H356ZM374.500 17H391V29H374.500Z" fill="#4cc8f8" />
      </svg>
      <div class="pill"><svg width="24" height="24" viewBox="0 0 24 24" fill="none" stroke="#333" stroke-width="2"><circle cx="12" cy="12" r="9" /></svg><span>Search</span>
        <svg class="town" width="52" height="18" viewBox="0 0 52 18"><path d="M1 10H12V18H1Z" fill="#d08a3c" /><path d="M13 4H23V18H13Z" fill="#e8e0d8" /><path d="M13 1H23V6H13ZM37 2H48V7H37Z" fill="#b33a36" /><path d="M24 8H35V18H24Z" fill="#4d7fb5" /><path d="M36 6H49V18H36Z" fill="#e0a050" /><path d="M4 7H9V12H4ZM27 5H32V9H27Z" fill="#8c3028" /><path d="M26 11H29V15H26ZM39 10H42V14H39ZM16 9H19V13H16Z" fill="#343f60" /></svg>
      </div>
      <svg width="640" height="29" viewBox="738 0 640 29">
        <path d="M768 20Q768 17 771 17H792Q795 17 795 20V29H768Z" fill="#f2f2f2" /><path d="M759 25H786V29H759Z" fill="#8a8a8a" />
        <path d="M825 18H838L841 21H859Q861 21 861 24V29H825Z" fill="#ffc83d" /><path d="M825 18H838L841 21L838 24H825Z" fill="#e3a008" />
        <path d="M899 21V17H917V21" fill="none" stroke="#29b6f6" stroke-width="2.500" /><path d="M890 20H926V29H890Z" fill="#f5f5f5" /><path d="M901 27H907V29H901Z" fill="#f25022" /><path d="M909 27H915V29H909Z" fill="#7fba00" />
        <path d="M959 29L964 25L969 29ZM974 29Q977 25 982 24V29Z" fill="#1f6fc9" /><circle cx="989" cy="20" r="11.700" fill="#60cdff" /><text x="989" y="26" text-anchor="middle" class="tx dk">1</text>
        <path d="M1023 29Q1025 16 1041 16Q1057 17 1059 29Z" fill="#2aa9dc" /><path d="M1042 16Q1058 18 1059 29H1048Q1052 21 1042 16Z" fill="#5ed66a" /><path d="M1023 29Q1027 22 1037 24Q1042 26 1043 29Z" fill="#1572c0" />
        <path d="M1098 18H1125V29H1098Z" fill="#41a5ee" /><path d="M1107 24H1125V29H1107Z" fill="#2b7cd3" /><path d="M1089 25H1108V29H1089Z" fill="#185abd" /><path d="M1093 27V29M1097 27V29M1101 27V29" stroke="#fff" />
        <rect x="1144" y="4.500" width="58" height="32" rx="5" fill="#343131" stroke="#444141" /><path d="M1174 16H1187V29H1174Z" fill="#e6a70c" /><path d="M1167 24H1179V29H1167Z" fill="#fbd24a" />
      </svg>
      <svg width="540" height="29" viewBox="1378 0 540 29" fill="none" stroke="#fff" stroke-width="1.600">
        <path d="M1381 29L1383 28L1385 29" /><circle cx="1431" cy="31" r="6" fill="#a5a3a3" stroke="none" /><path d="M1469 29Q1471 22 1479 22Q1485 22 1489 27M1490 22V29H1484" />
        <text x="1520" y="39" class="tx eng" stroke="none">ENG</text>
        <path d="M1582 29V22H1597V29M1599 29V22H1604V29M1620 29L1626 25V29M1629 26Q1632 28 1631 29M1634 23Q1637 26 1637 29M1660 22L1656 29H1660M1662 25H1671V29" />
        <text x="1720" y="27.500" class="tx clock" stroke="none" textLength="74">11:17 pm</text>
        <path d="M1810 29Q1812 23 1818 23Q1824 23 1826 29" /><path d="M1858 29Q1861 18 1868 18H1877Q1880 19 1882 29Z" fill="#1e8fe0" stroke="none" /><path d="M1856 29Q1858 24 1864 24L1867 29Z" fill="#46c37b" stroke="none" /><path d="M1876 29Q1878 24 1884 25Q1889 26 1890 29Z" fill="#c05ad8" stroke="none" />
      </svg>
    </div>
  </div>
</template>

<style>
body { margin: 0; overflow: hidden; }
</style>

<style scoped>
.screen { width: 1918px; height: 1114px; display: flex; flex-direction: column; overflow: hidden; font: 17.5px/24px 'Open Sans', 'Noto Sans', sans-serif; letter-spacing: -.012em; color: #252423; background: #f3f2f1; }
.screen svg { flex: none; display: block; }
h2 { margin: 0; font-size: 23px; font-weight: 600; letter-spacing: -.015em; }
.titlebar { height: 6px; background: #3b3936; flex: none; }
.ribbon { height: 189px; background: #fafafa; flex: none; box-shadow: 0 1px 6px rgba(0,0,0,.28); position: relative; z-index: 2; }
.menu { display: flex; height: 54px; }
.mi { height: 47px; box-sizing: border-box; padding-top: 12px; font-size: 20.500px; white-space: nowrap; }
.mi.on { font-weight: 600; border-bottom: 5px solid #117865; letter-spacing: -.02em; }
.share { margin: 6px 7px 0 auto; width: 125px; height: 36px; border: 0; border-radius: 6px; background: #117865; color: #fff; display: flex; align-items: center; padding: 0 11px 0 9px; gap: 7px; font: inherit; font-size: 17px; letter-spacing: -.02em; }
.share span { margin-left: 6px; padding-top: 1px; }
.tools { display: flex; height: 132px; }
.group { height: 132px; box-sizing: border-box; border-right: 1px solid #d6d4d2; flex: none; display: flex; flex-direction: column; }
.clip { width: 240px; }
.gbody { display: flex; height: 112px; font-size: 17.3px; letter-spacing: -.022em; }
.gname { font-size: 14.6px; line-height: 24px; text-align: center; color: #3b3a39; }
.cbody { height: 112px; flex: none; display: flex; color: #c5c3c1; font-size: 17.300px; letter-spacing: -.02em; }
.paste { width: 48px; margin: 6px 0 0 18px; display: flex; flex-direction: column; align-items: center; }
.paste span { margin-top: 4px; }
.clist { margin-left: 12px; white-space: nowrap; }
.clist div { height: 36px; display: flex; align-items: center; gap: 4px; }
.cell { display: flex; justify-content: center; flex: none; }
.btn { width: 60px; height: 108px; margin-top: 4px; padding-top: 2px; box-sizing: border-box; display: flex; flex-direction: column; align-items: center; white-space: nowrap; flex: none; }
.btn span { margin-top: 2px; height: 22px; line-height: 24px; }
.btn .l2 { display: flex; align-items: center; gap: 4px; margin-top: 3px; }
.btn .drop2 { padding-right: 3px; }
.hot { background: #f3f2f1; }
.off { color: #c5c3c1; }
.fold { margin: 116px 6px 0 auto; }

.work { display: flex; height: 852px; flex: none; }
.rail { width: 60px; border-right: 1px solid #dcdad8; display: flex; flex-direction: column; align-items: center; }
.ind { width: 4px; height: 60px; background: #117865; align-self: flex-start; margin-bottom: -60px; }
.rail svg:nth-child(2) { margin-top: 18px; margin-left: 2px; }
.rail svg:nth-child(3) { margin-top: 34px; margin-left: 1px; }
.rail svg:nth-child(4) { margin-top: 35px; margin-left: 2px; }
.rail svg:nth-child(5) { margin-top: 34px; margin-right: 2px; }
.stage { width: 1317px; flex: none; }
.canvas-row { display: flex; height: 799px; background: #fff; }
.canvas { width: 1015px; border-right: 1px solid #b3b0ad; }
.page { width: 1014px; height: 571px; border-right: 1px dashed #605e5c; border-bottom: 3px dotted #605e5c; display: flex; flex-direction: column; }
.back { margin: 3px 0 0 3px; }
.visual { display: flex; margin: 36px 0 0 252px; }
.tbl { width: 481px; font-size: 10.4px; letter-spacing: -.02em; line-height: 18.2px; }
.tr { display: grid; grid-template-columns: 42.5px 145.500px 82.500px 77px 1fr; height: 16.64px; white-space: nowrap; }
.tr span:nth-child(1), .tr span:nth-child(3) { text-align: right; }
.tr span:nth-child(2), .tr span:nth-child(4), .tr span:nth-child(5) { padding-left: 7.500px; text-align: left; }
.th { line-height: 28.500px; border-bottom: 1.500px solid #a0d1ff; box-sizing: border-box; height: 26.500px; }
.th span:nth-child(1), .th span:nth-child(3) { padding-right: 1px; letter-spacing: -.025em; }
.tb { height: 293.500px; overflow: hidden; border-bottom: 1.500px solid #118dff; color: #333; }
.tb .tr:nth-child(even) { background: #ececec; }
.tot { font-weight: 600; letter-spacing: 0; line-height: 17px; }
.thumb { width: 7px; height: 11px; border-radius: 4px; background: #b3b0ad; margin: 5px 0 0 23px; }
.card { margin-top: 56px; padding-left: 1px; display: flex; flex-direction: column; align-items: center; }
.card b { font: 400 42px/48px Roboto, sans-serif; letter-spacing: 0; height: 47px; }
.card span { font-size: 12.300px; color: #605e5c; letter-spacing: -.02em; }

.filters { width: 301px; }
.fh { display: flex; align-items: center; height: 60px; padding-left: 16px; }
.fh h2 { margin: 0 0 0 12px; width: 168px; }
.fh .eye { margin-right: 25px; }
.search { width: 254px; height: 44px; margin: 8px 0 0 12px; border: 1px solid #b3b0ad; border-radius: 3px; display: flex; align-items: center; gap: 20px; padding-left: 15px; color: #3b3a39; }
.rule { height: 1px; background: #b3b0ad; margin-top: 6px; margin-bottom: 25px; }
.fl { display: flex; align-items: center; height: 24px; padding-left: 12px; margin-bottom: 13px; }
.fl span { width: 254px; }
.fl i { width: 2px; height: 2px; background: #3b3a39; margin-right: 5px; margin-top: 8px; }
.drop { width: 275px; height: 67px; margin: 0 0 39px 12px; border: 1px solid #c8c6c4; border-radius: 3px; line-height: 68px; text-align: center; }
.pages { display: flex; height: 52px; border-bottom: 1px solid #dcdad8; }
.pt { background: #fff; border-left: 1px solid #b3b0ad; text-align: center; line-height: 55px; box-sizing: border-box; height: 52px; white-space: nowrap; }
.p1 { width: 134px; } .p2 { width: 115px; } .p3 { width: 158px; }
.p4 { width: 163px; font-weight: 600; letter-spacing: -.028em; border-bottom: 6px solid #117865; position: relative; }
.p4 i { position: absolute; right: 8px; top: 2px; font-style: normal; font-size: 15px; line-height: 22px; }
.add { width: 58px; background: #117865; display: flex; align-items: center; justify-content: center; }

.viz { width: 270px; border-left: 1px solid #dcdad8; flex: none; border-right: 1px solid #dcdad8; margin-right: -1px; border-bottom: 1px solid #dcdad8; height: 851px; }
.vh { display: flex; align-items: center; justify-content: space-between; height: 60px; padding: 0 12px; }
.vh h2 { font-size: 23.200px; letter-spacing: -.012em; }
.bv { padding-left: 12px; font-weight: 600; font-size: 16.700px; line-height: 18px; padding-bottom: 2px; }
.modes { display: flex; margin: 6px 0 7px 12px; height: 48px; }
.mode { width: 48px; height: 48px; background: #d2d0ce; border-radius: 3px; margin-right: 56px; }
.modes > svg { margin-top: 5px; }
.vgrid { display: grid; grid-template-columns: repeat(6, 28px); gap: 14px; margin: 15px 0 0 16px; }
.wells { margin-top: 13px; border-top: 1px solid #dcdad8; padding-top: 13px; }
.wl { padding-left: 18px; height: 24px; }
.well { margin: 8px 0 0 6px; width: 253px; height: 40px; line-height: 38px; border: 1px dashed #bebbb8; border-radius: 3px; background: #fff; text-indent: 15px; }
.dr { font-weight: 600; color: #484644; margin-top: 16px; font-size: 17.200px; }
.sw { display: flex; align-items: center; margin-top: 13px; }
.sw + .sw { margin-top: 16px; }
.sw > span { width: 171px; }
.tg { width: 46px; height: 22px; border: 1px solid #797774; border-radius: 12px; background: #fff; display: flex; align-items: center; justify-content: center; gap: 4px; font-size: 13.500px; color: #605e5c; }
.tg i { width: 12px; height: 12px; border-radius: 50%; background: #605e5c; }
.tg.on { background: #117865; border-color: #117865; color: #fff; }
.tg.on i { background: #fff; }
.fbox { margin: 15px 0 0 6px; width: 247px; height: 76px; padding: 3px; border: 1px dashed #bebbb8; border-radius: 3px; background: #fff; }
.fcard { border: 1px solid #bebbb8; border-radius: 3px; background: #f3f2f1; height: 61px; padding: 1px 0 0 12px; line-height: 29px; }
.f1 { display: flex; align-items: center; justify-content: space-between; padding: 3px 9px 0 0; height: 26px; }
.f1 span { padding-bottom: 2px; }

.data { width: 268px; border-left: 1px solid #dcdad8; border-bottom: 1px solid #dcdad8; flex: 1; height: 851px; }
.data .vh { padding: 0 10px 0 12px; }
.ds { height: 37px; width: 244px; margin: 8px 0 15px 6px; border: 1px solid #797774; border-radius: 3px; display: flex; align-items: center; gap: 9px; padding-left: 11px; color: #484644; }
.ds span { padding-top: 2px; }
.node { height: 36px; display: flex; align-items: center; padding-left: 19px; color: #3b3a39; white-space: nowrap; }
.ti { margin: 0 5px 0 4px; }
.leaf { padding-left: 66px; }
.leaf i { width: 16px; height: 16px; border: 1px solid #797774; border-radius: 3px; margin-right: 39px; }

.status { height: 35px; display: flex; align-items: center; flex: none; padding-left: 6px; color: #3b3a39; box-sizing: border-box; }
.status > span:first-child { width: 1595px; padding-top: 3px; letter-spacing: 0; }
.pct { width: 45px; margin-left: 19px; font-size: 17px; color: #605e5c; letter-spacing: -.03em; }
.status svg:last-child { margin-left: 17px; }
.taskbar { height: 32px; box-sizing: border-box; border-top: 1px solid #000; box-shadow: inset 0 2px #454341; padding-top: 2px; display: flex; flex: none; overflow: hidden; background: linear-gradient(90deg, #2b1d19 0, #2a1e1b 18%, #231f22 38%, #1f2128 50%, #231e24 60%, #20232b 70%, #321f19 80%, #251e1d 92%, #211e1e 100%); }
.tx { font: 16px 'Open Sans', sans-serif; fill: #fff; letter-spacing: -.3px; }
.dk { fill: #111; }
.eng { font-size: 16px; font-weight: 600; }
.clock { font-size: 17px; }
.pill { width: 324px; height: 46px; margin-top: 12px; border-radius: 23px; background: #f2f0ef; display: flex; align-items: flex-start; flex: none; }
.pill svg:first-child { margin: 7px 0 0 12px; }
.pill span { margin: 9px 0 0 17px; width: 197px; color: #555; }
.town { margin-top: 6px; }
</style>
